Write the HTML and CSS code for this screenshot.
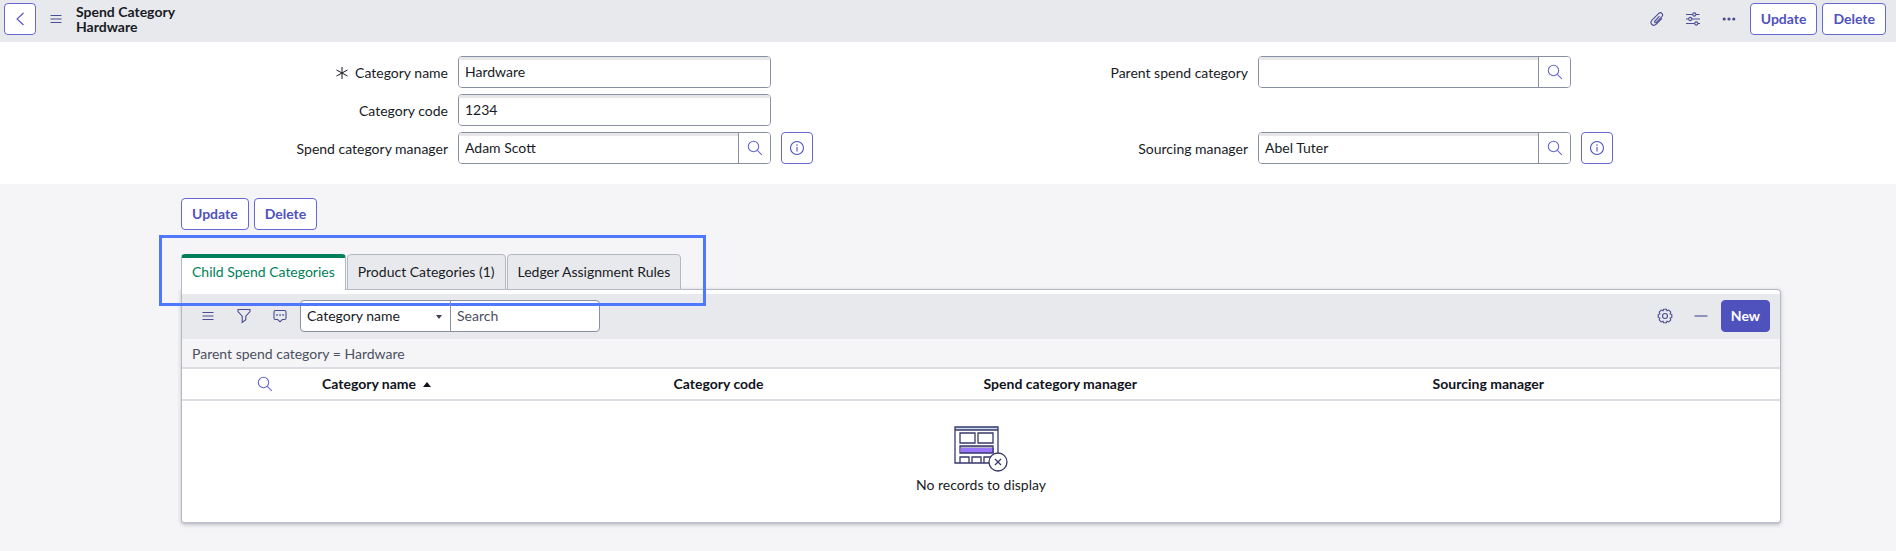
FILE: index.html
```html
<!DOCTYPE html>
<html lang="en">

<head>
    <meta charset="UTF-8">
    <meta name="viewport" content="width=device-width, initial-scale=1.0">
    <title>Hardware | Spend Category</title>
    <link rel="stylesheet" href="styles.css">
</head>

<body>
    <!-- Icons -->
    <svg class="sprite" aria-hidden="true">
        <symbol id="icon-search" viewBox="0 0 16 16">
            <circle cx="6.5" cy="6.5" r="5.2" />
            <path d="M10.300 10.300l4.500 4.500" />
        </symbol>
        <symbol id="icon-info" viewBox="0 0 16 16">
            <circle cx="8" cy="8" r="6.5" />
            <path d="M8 7v4.500M8 4.300v1.400" />
        </symbol>
        <symbol id="icon-menu" viewBox="0 0 16 16">
            <path d="M2.500 4.500h11M2.500 8h11M2.500 11.500h11" />
        </symbol>
    </svg>

    <!-- Form header -->
    <header class="form-header">
        <button class="btn btn-back" type="button" aria-label="Back">
            <svg class="icon" viewBox="0 0 16 16"><path d="M11.500 2L5 8l6.500 6" /></svg>
        </button>
        <button class="icon-btn menu-btn" type="button" aria-label="Additional actions">
            <svg class="icon"><use href="#icon-menu" /></svg>
        </button>
        <h1 class="form-title">Spend Category<br>Hardware</h1>
        <div class="header-icons">
            <button class="icon-btn" type="button" aria-label="Manage attachments">
                <svg class="icon" viewBox="0 0 16 16"><path d="M10.500 5.200L6 10c-1 1.100.4 2.400 1.400 1.300l5.400-5.600c2.200-2.500-1-5.400-3.300-3.100L3 9.200c-2.900 3.200 1.200 7 4.300 4l5.700-5.900" /></svg>
            </button>
            <button class="icon-btn" type="button" aria-label="Personalize form">
                <svg class="icon" viewBox="0 0 16 16">
                    <path d="M1 3.500h6.500M11 3.500h3.500M1 8h2.500M7 8h8M1 12.500h8.500M13 12.500h2" />
                    <circle cx="9.300" cy="3.500" r="1.600" />
                    <circle cx="5.200" cy="8" r="1.600" />
                    <circle cx="11.300" cy="12.500" r="1.600" />
                </svg>
            </button>
            <button class="icon-btn" type="button" aria-label="More options">
                <svg class="icon icon-solid" viewBox="0 0 16 16">
                    <circle cx="3.200" cy="8" r="1.600" />
                    <circle cx="8" cy="8" r="1.600" />
                    <circle cx="12.800" cy="8" r="1.600" />
                </svg>
            </button>
        </div>
        <div class="btn-group">
            <button class="btn" type="button">Update</button>
            <button class="btn" type="button">Delete</button>
        </div>
    </header>

    <!-- Form fields -->
    <form class="form-body">
        <div class="form-column">
            <div class="form-row">
                <label for="category-name">
                    <svg class="icon mandatory" viewBox="0 0 16 16"><path d="M8 2v12M2.500 5l11 6M13.500 5l-11 6" /></svg>
                    Category name
                </label>
                <div class="field">
                    <input id="category-name" type="text" value="Hardware" required>
                </div>
            </div>
            <div class="form-row">
                <label for="category-code">Category code</label>
                <div class="field">
                    <input id="category-code" type="text" value="1234">
                </div>
            </div>
            <div class="form-row">
                <label for="category-manager">Spend category manager</label>
                <div class="field">
                    <input id="category-manager" type="text" value="Adam Scott">
                    <button class="lookup" type="button" aria-label="Look up spend category manager">
                        <svg class="icon"><use href="#icon-search" /></svg>
                    </button>
                </div>
                <button class="btn btn-info" type="button" aria-label="Preview spend category manager">
                    <svg class="icon"><use href="#icon-info" /></svg>
                </button>
            </div>
        </div>
        <div class="form-column">
            <div class="form-row">
                <label for="parent-category">Parent spend category</label>
                <div class="field">
                    <input id="parent-category" type="text">
                    <button class="lookup" type="button" aria-label="Look up parent spend category">
                        <svg class="icon"><use href="#icon-search" /></svg>
                    </button>
                </div>
            </div>
            <div class="form-row">
                <label for="sourcing-manager">Sourcing manager</label>
                <div class="field">
                    <input id="sourcing-manager" type="text" value="Abel Tuter">
                    <button class="lookup" type="button" aria-label="Look up sourcing manager">
                        <svg class="icon"><use href="#icon-search" /></svg>
                    </button>
                </div>
                <button class="btn btn-info" type="button" aria-label="Preview sourcing manager">
                    <svg class="icon"><use href="#icon-info" /></svg>
                </button>
            </div>
        </div>
    </form>

    <main class="related">
        <div class="btn-group">
            <button class="btn" type="button">Update</button>
            <button class="btn" type="button">Delete</button>
        </div>

        <!-- Related list tabs -->
        <div class="tabs" role="tablist">
            <button class="tab active" type="button" role="tab" aria-selected="true">Child Spend Categories</button>
            <button class="tab" type="button" role="tab" aria-selected="false">Product Categories (1)</button>
            <button class="tab" type="button" role="tab" aria-selected="false">Ledger Assignment Rules</button>
            <div class="tabs-highlight"></div>
        </div>

        <section class="list">
            <div class="toolbar">
                <button class="icon-btn" type="button" aria-label="List controls">
                    <svg class="icon"><use href="#icon-menu" /></svg>
                </button>
                <button class="icon-btn" type="button" aria-label="Show filter">
                    <svg class="icon" viewBox="0 0 16 16"><path d="M2 1.500h12v2L9.800 8.200v3.600L6.200 14.500V8.200L2 3.500z" /></svg>
                </button>
                <button class="icon-btn" type="button" aria-label="Activity stream">
                    <svg class="icon" viewBox="0 0 16 16">
                        <path d="M3.500 2.500h9q1.500 0 1.500 1.500v6q0 1.500-1.500 1.500h-2.200L8 13.800l-2.300-2.300H3.500Q2 11.500 2 10V4Q2 2.500 3.500 2.500z" />
                        <path class="chat-dots" d="M4.300 7h1.500M7.300 7h1.500M10.300 7h1.500" />
                    </svg>
                </button>
                <div class="search-group">
                    <div class="select-wrap">
                        <select aria-label="Search column">
                            <option>Category name</option>
                            <option>Category code</option>
                            <option>Spend category manager</option>
                            <option>Sourcing manager</option>
                        </select>
                    </div>
                    <input type="text" placeholder="Search" aria-label="Search">
                </div>
                <div class="toolbar-right">
                    <button class="icon-btn" type="button" aria-label="Update personalized list">
                        <svg class="icon" viewBox="0 0 16 16">
                            <circle cx="8" cy="8" r="2.500" />
                            <path d="M6.600 1.200h2.800l.6 1.600 1.800-.7 2 2-.7 1.800 1.700.7v2.800l-1.700.7.7 1.800-2 2-1.800-.7-.6 1.600H6.600L6 13.200l-1.800.7-2-2 .7-1.800-1.700-.7V6.600l1.700-.7-.7-1.800 2-2 1.800.7z" />
                        </svg>
                    </button>
                    <button class="icon-btn" type="button" aria-label="Collapse list">
                        <svg class="icon" viewBox="0 0 16 16"><path d="M1.500 8h13" /></svg>
                    </button>
                    <button class="btn btn-primary" type="button">New</button>
                </div>
            </div>
            <div class="breadcrumb">Parent spend category = Hardware</div>
            <table>
                <colgroup>
                    <col class="col-tools">
                    <col class="col-name">
                    <col class="col-code">
                    <col class="col-manager">
                    <col>
                </colgroup>
                <thead>
                    <tr>
                        <td class="search-cell">
                            <button class="icon-btn" type="button" aria-label="Show column search row">
                                <svg class="icon"><use href="#icon-search" /></svg>
                            </button>
                        </td>
                        <th scope="col" aria-sort="ascending">Category name<span class="sort-asc"></span></th>
                        <th scope="col">Category code</th>
                        <th scope="col">Spend category manager</th>
                        <th scope="col">Sourcing manager</th>
                    </tr>
                </thead>
                <tbody>
                    <tr>
                        <td class="empty" colspan="5">
                            <svg class="empty-art" viewBox="0 0 54 46" aria-hidden="true">
                                <path class="band" d="M1 1h43v3H1z" />
                                <path class="shade" d="M6 20h33v2H6z" />
                                <path class="fill" d="M7 22h33v5H7z" />
                                <path d="M1 37V1h43v36zM1 4h43M6 7h15v10H6zM24 7h15v10H24zM6 20h33v7H6zM6 37v-6h9v6M18 37v-6h9v6M30 37v-6h9" />
                                <circle class="badge" cx="44" cy="36" r="9" />
                                <path d="M41 33l6 6M47 33l-6 6" />
                            </svg>
                            <div>No records to display</div>
                        </td>
                    </tr>
                </tbody>
            </table>
        </section>
    </main>
</body>

</html>
```
FILE: styles.css
```css
* {
    box-sizing: border-box;
}

body {
    margin: 0;
    background: #f5f5f7;
    color: #181b25;
    font-family: Lato, "Liberation Sans", sans-serif;
    font-size: 14px;
    line-height: 20px;
}

button,
input,
select {
    font: inherit;
    color: inherit;
}

button {
    cursor: pointer;
}

.sprite {
    display: none;
}

.icon {
    display: block;
    width: 16px;
    height: 16px;
    fill: none;
    stroke: currentColor;
    stroke-width: 1.1;
}

.icon-solid {
    fill: currentColor;
    stroke: none;
}

.chat-dots {
    stroke-width: 1.6;
}

/* Buttons */
.btn {
    height: 32px;
    padding: 0 10px;
    background: #fff;
    border: 1px solid #6668d0;
    border-radius: 4px;
    color: #4f52bd;
    font-weight: bold;
}

.btn-back,
.btn-info {
    display: flex;
    align-items: center;
    justify-content: center;
    width: 32px;
    padding: 0;
}

.btn-primary {
    padding: 0 9px;
    background: #4f52bd;
    border-color: #4f52bd;
    color: #fff;
}

.btn-group {
    display: flex;
    gap: 5px;
}

.icon-btn {
    display: flex;
    align-items: center;
    justify-content: center;
    width: 36px;
    height: 32px;
    padding: 0;
    border: 0;
    background: none;
    color: #4a4c94;
}

/* Form header */
.form-header {
    display: flex;
    align-items: center;
    height: 42px;
    padding: 0 10px 4px 4px;
    background: #e8e9ed;
}

.menu-btn {
    width: 40px;
}

.form-title {
    margin: 0;
    font-size: 14px;
    line-height: 15px;
}

.header-icons {
    display: flex;
    margin-left: auto;
    margin-right: 3px;
}

/* Form fields */
.form-body {
    display: grid;
    grid-template-columns: 1fr 1fr;
    padding: 14px 148px 20px;
    background: #fff;
}

.form-column {
    display: flex;
    flex-direction: column;
    justify-content: space-between;
    gap: 6px;
}

.form-row {
    display: grid;
    grid-template-columns: 300fr 313fr 167fr;
    gap: 10px;
    align-items: center;
}

.form-row label {
    display: flex;
    align-items: center;
    justify-content: flex-end;
    padding-top: 2px;
}

.mandatory {
    margin-right: 5px;
    stroke-width: 1;
}

.field {
    display: flex;
    height: 32px;
    border: 1px solid #8b8fa3;
    border-radius: 4px;
    overflow: hidden;
}

.field input {
    flex: 1;
    min-width: 0;
    padding: 0 6px;
    border: 0;
    background: #fff;
    box-shadow: inset 0 3px 1px #e6e6e8;
}

.lookup {
    display: flex;
    align-items: center;
    justify-content: center;
    width: 32px;
    padding: 0;
    background: #fff;
    border: 0;
    border-left: 1px solid #8b8fa3;
    color: #6668d0;
}

/* Related lists */
.related {
    display: flex;
    flex-direction: column;
    align-items: flex-start;
    padding: 14px 115px 27px 181px;
}

.tabs {
    position: relative;
    display: flex;
    gap: 1px;
    margin-top: 24px;
    margin-bottom: -1px;
}

.tab {
    height: 36px;
    padding: 0 10px;
    background: #e8e9ed;
    border: 1px solid #b4b8c2;
    border-radius: 4px 4px 0 0;
}

.tab.active {
    background: #fff;
    border-top: 4px solid #00805a;
    border-bottom: 0;
    color: #00805a;
    padding-bottom: 4px;
}

.tabs-highlight {
    position: absolute;
    inset: -19px -25px -16px -22px;
    border: 3px solid #5078ff;
    pointer-events: none;
}

.list {
    width: 100%;
    padding-top: 4px;
    background: #fff;
    border: 1px solid #b4b8c2;
    border-bottom: 2px solid #c0c1ce;
    border-radius: 0 4px 4px 4px;
    box-shadow: 0 1px 4px rgba(0, 0, 0, 0.2);
}

.toolbar {
    display: flex;
    align-items: center;
    height: 45px;
    padding: 0 10px 2px 8px;
    background: #e8e9ed;
}

.search-group {
    display: flex;
    width: 300px;
    height: 32px;
    margin-left: 2px;
    background: #fff;
    border: 1px solid #8b8fa3;
    border-radius: 4px;
}

.search-group input,
.search-group select {
    width: 100%;
    height: 100%;
    padding: 0 6px;
    background: none;
    border: 0;
    appearance: none;
}

.search-group input {
    flex: 1;
    min-width: 0;
}

.search-group input::placeholder {
    color: #4b5060;
    opacity: 1;
}

.select-wrap {
    position: relative;
    width: 150px;
    border-right: 1px solid #8b8fa3;
}

.select-wrap::after {
    content: "";
    position: absolute;
    top: 14px;
    right: 8px;
    border: 3px solid transparent;
    border-top: 4px solid #3c4150;
    border-bottom: 0;
    pointer-events: none;
}

.toolbar-right {
    display: flex;
    margin-left: auto;
}

.toolbar-right .btn {
    margin-left: 2px;
}

.breadcrumb {
    padding: 5px 10px 3px;
    background: #f5f5f7;
    color: #4b5060;
}

/* List table */
table {
    width: 100%;
    border-collapse: collapse;
    table-layout: fixed;
}

.col-tools {
    width: 132px;
}

.col-name {
    width: 22%;
}

.col-code {
    width: 19.4%;
}

.col-manager {
    width: 28.1%;
}

thead tr {
    height: 32px;
    border-top: 2px solid #dddee4;
    border-bottom: 2px solid #dddee4;
}

th {
    padding: 0 8px;
    text-align: left;
    color: #10131c;
}

.search-cell {
    padding: 0 0 0 65px;
}

.search-cell .icon-btn {
    height: 28px;
    color: #6668d0;
}

.sort-asc {
    display: inline-block;
    margin-left: 7px;
    vertical-align: 2px;
    border: 4px solid transparent;
    border-top: 0;
    border-bottom: 5px solid #10131c;
}

.empty {
    padding: 25px 0 27px;
    text-align: center;
}

.empty-art {
    display: block;
    width: 54px;
    height: 46px;
    margin: 0 auto 3px;
    fill: none;
    stroke: #38386b;
    stroke-width: 1.3;
}

.empty-art .band {
    fill: #c9dcec;
    stroke: none;
}

.empty-art .shade {
    fill: #b9b6c6;
    stroke: none;
}

.empty-art .fill {
    fill: #9a75ff;
    stroke: none;
}

.empty-art .badge {
    fill: #fff;
}
```
